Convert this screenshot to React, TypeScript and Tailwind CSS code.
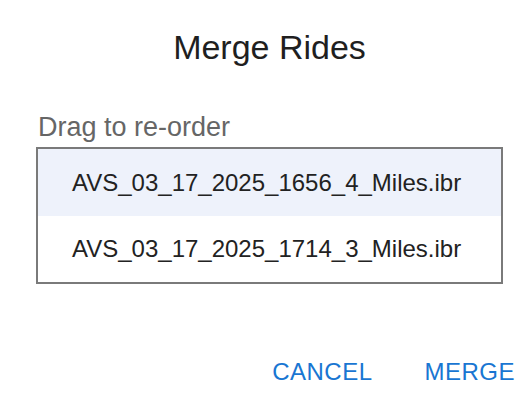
const rides = [
  "AVS_03_17_2025_1656_4_Miles.ibr",
  "AVS_03_17_2025_1714_3_Miles.ibr",
];

export default function App() {
  return (
    <div
      className="flex h-[414px] w-[526px] flex-col bg-white pl-[36px] pr-[23px]"
      style={{ fontFamily: '"Liberation Sans", Arial, sans-serif' }}
    >
      <h2 className="mt-[27px] text-center text-[34px] leading-[40px] text-[#1f1f1f]">
        Merge Rides
      </h2>

      <p className="mt-[44px] pl-[2px] text-[27px] leading-[32px] text-[#666666]">
        Drag to re-order
      </p>

      <ul className="mt-[4px] border-2 border-[#7a7a7a]">
        {rides.map((name, i) => (
          <li
            key={name}
            className={
              i === 0
                ? "h-[67px] bg-[#eef2fb] pl-[34px] text-[24px] leading-[67px] text-[#222222]"
                : "h-[66px] bg-white pl-[34px] text-[24px] leading-[66px] text-[#222222]"
            }
          >
            {name}
          </li>
        ))}
      </ul>

      <div className="-mr-[12px] mt-[68px] flex justify-end gap-[52px]">
        <button className="text-[24px] uppercase leading-[40px] tracking-[0.5px] text-[#1976d2]">
          Cancel
        </button>
        <button className="text-[24px] uppercase leading-[40px] tracking-[0.5px] text-[#1976d2]">
          Merge
        </button>
      </div>
    </div>
  );
}
